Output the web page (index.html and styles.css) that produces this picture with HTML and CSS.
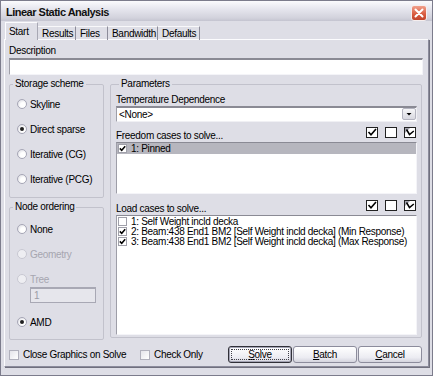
FILE: index.html
```html
<!DOCTYPE html>
<html lang="en">
<head>
    <title>Linear Static Analysis</title>
    <link rel="stylesheet" href="styles.css">
</head>
<body>
<div class="window">
    <div class="titlebar">
        <span class="title">Linear Static Analysis</span>
        <span class="close-btn">
            <svg width="16" height="16" viewBox="0 0 16 16"><path d="M4.5 4.5 L11.5 11.5 M11.5 4.5 L4.5 11.5" stroke="#fff" stroke-width="2" stroke-linecap="round"/></svg>
        </span>
    </div>

    <div class="tabs">
        <span class="tab selected w-start">Start</span>
        <span class="tab w-results">Results</span>
        <span class="tab w-files">Files</span>
        <span class="tab w-band">Bandwidth</span>
        <span class="tab w-defaults">Defaults</span>
    </div>

    <div class="panel">
        <div class="label">Description</div>
        <div class="textbox"></div>

        <div class="columns">
            <div class="left-col">
                <fieldset class="group storage">
                    <legend>Storage scheme</legend>
                    <div class="option first"><span class="dot"></span>Skyline</div>
                    <div class="option checked"><span class="dot"></span>Direct sparse</div>
                    <div class="option"><span class="dot"></span>Iterative (CG)</div>
                    <div class="option"><span class="dot"></span>Iterative (PCG)</div>
                </fieldset>

                <fieldset class="group nodes">
                    <legend>Node ordering</legend>
                    <div class="option first"><span class="dot"></span>None</div>
                    <div class="option disabled"><span class="dot"></span>Geometry</div>
                    <div class="option disabled"><span class="dot"></span>Tree</div>
                    <div class="tree-box">1</div>
                    <div class="option checked amd"><span class="dot"></span>AMD</div>
                </fieldset>
            </div>

            <fieldset class="group params">
                <legend>Parameters</legend>
                <div class="label temp-label">Temperature Dependence</div>
                <div class="select">
                    <span class="select-text">&lt;None&gt;</span>
                    <span class="drop-btn">
                        <svg width="12" height="10" viewBox="0 0 12 10"><path d="M3.5 4 H8.5 L6 6.5 Z" fill="#000"/></svg>
                    </span>
                </div>

                <div class="list-head">
                    <span class="head-text">Freedom cases to solve...</span>
                    <span class="tools">
                        <svg width="12" height="11" viewBox="0 0 12 11"><rect x="0.5" y="0.5" width="11" height="10" fill="#fff" stroke="#222"/><path d="M2.5 5 L5 7.8 L10 2" stroke="#000" stroke-width="1.6" fill="none"/></svg>
                        <svg width="12" height="11" viewBox="0 0 12 11"><rect x="0.5" y="0.5" width="11" height="10" fill="#fff" stroke="#222"/></svg>
                        <svg width="12" height="11" viewBox="0 0 12 11"><rect x="0.5" y="0.5" width="11" height="10" fill="#fff" stroke="#222"/><path d="M1 1 H6 L1 6 Z" fill="#a4a4ae"/><path d="M2.5 2.5 L5.5 7.5 L9.8 4" stroke="#000" stroke-width="1.5" fill="none"/></svg>
                    </span>
                </div>
                <div class="listbox freedom">
                    <div class="item selected"><span class="cb"><svg width="7" height="7" viewBox="0 0 7 7"><path d="M0.8 3.4 L2.7 5.3 L6.2 1.2" stroke="#000" stroke-width="1.5" fill="none"/></svg></span>1: Pinned</div>
                </div>

                <div class="list-head load-head">
                    <span class="head-text">Load cases to solve...</span>
                    <span class="tools">
                        <svg width="12" height="11" viewBox="0 0 12 11"><rect x="0.5" y="0.5" width="11" height="10" fill="#fff" stroke="#222"/><path d="M2.5 5 L5 7.8 L10 2" stroke="#000" stroke-width="1.6" fill="none"/></svg>
                        <svg width="12" height="11" viewBox="0 0 12 11"><rect x="0.5" y="0.5" width="11" height="10" fill="#fff" stroke="#222"/></svg>
                        <svg width="12" height="11" viewBox="0 0 12 11"><rect x="0.5" y="0.5" width="11" height="10" fill="#fff" stroke="#222"/><path d="M1 1 H6 L1 6 Z" fill="#a4a4ae"/><path d="M2.5 2.5 L5.5 7.5 L9.8 4" stroke="#000" stroke-width="1.5" fill="none"/></svg>
                    </span>
                </div>
                <div class="listbox loads">
                    <div class="item"><span class="cb"></span>1: Self Weight incld decka</div>
                    <div class="item"><span class="cb"><svg width="7" height="7" viewBox="0 0 7 7"><path d="M0.8 3.4 L2.7 5.3 L6.2 1.2" stroke="#000" stroke-width="1.5" fill="none"/></svg></span>2: Beam:438 End1 BM2 [Self Weight incld decka] (Min Response)</div>
                    <div class="item"><span class="cb"><svg width="7" height="7" viewBox="0 0 7 7"><path d="M0.8 3.4 L2.7 5.3 L6.2 1.2" stroke="#000" stroke-width="1.5" fill="none"/></svg></span>3: Beam:438 End1 BM2 [Self Weight incld decka] (Max Response)</div>
                </div>
            </fieldset>
        </div>

        <div class="bottom-row">
            <span class="check-opt close-opt"><span class="box"></span>Close Graphics on Solve</span>
            <span class="check-opt"><span class="box"></span>Check Only</span>
            <span class="buttons">
                <span class="btn default"><u>S</u>olve</span>
                <span class="btn"><u>B</u>atch</span>
                <span class="btn"><u>C</u>ancel</span>
            </span>
        </div>
    </div>
</div>
</body>
</html>
```

FILE: styles.css
```css
body {
    margin: 0;
    font-family: "Liberation Sans", Arial, sans-serif;
    font-size: 10px;
    letter-spacing: -0.3px;
    color: #000;
    background: #fff;
}

.window {
    width: 433px;
    height: 376px;
    box-sizing: border-box;
    border: 1px solid #7c7c8c;
    background: #dedee6;
    padding: 0 3px;
}

/* title bar */
.titlebar {
    display: flex;
    justify-content: space-between;
    height: 20px;
    margin: 0 -3px;
    background: linear-gradient(#fbfbfd, #e6e6ee 40%, #d2d2dc 85%, #c4c4d0);
}

.title {
    font-weight: bold;
    font-size: 11px;
    letter-spacing: -0.5px;
    line-height: 20px;
    padding: 1px 0 0 5px;
    color: #111;
}

.close-btn {
    width: 16px;
    height: 16px;
    margin: 4px 5px 0 0;
    box-sizing: border-box;
    border: 1px solid #f6eeee;
    border-radius: 3px;
    background: linear-gradient(#f0a08c, #d85a3e 60%, #c0442c);
    display: flex;
    align-items: center;
    justify-content: center;
}

.close-btn svg {
    margin: -1px;
}

/* tabs */
.tabs {
    display: flex;
    align-items: flex-end;
    height: 17px;
    margin-top: 2px;
    margin-bottom: -1px;
    padding-left: 1px;
}

.tab {
    box-sizing: border-box;
    height: 14px;
    line-height: 13px;
    padding-left: 4px;
    border-top: 1px solid #f8f8fa;
    border-right: 1px solid #8c8c9a;
    white-space: nowrap;
}

.tab.selected {
    position: relative;
    height: 18px;
    line-height: 17px;
    border: 1px solid #a8a8b4;
    border-bottom: none;
    border-left-color: #fcfcfe;
    border-top-color: #fcfcfe;
    background: #dedee6;
    padding-left: 3px;
}

.w-start { width: 33px; }
.w-results { width: 38px; }
.w-files { width: 32px; }
.w-band { width: 50px; }
.w-defaults { width: 42px; }

/* tab page */
.panel {
    height: 328px;
    box-sizing: border-box;
    border: 1px solid;
    border-color: #fcfcfe #8c8c9c #8c8c9c #fcfcfe;
    box-shadow: 1px 1px 0 #70707e;
    padding: 5px 5px 0 4px;
}

.label {
    line-height: 12px;
    white-space: nowrap;
}

.textbox {
    height: 17px;
    margin-top: 1px;
    box-sizing: border-box;
    background: #fff;
    border: 1px solid;
    border-top: 2px solid #8a8a94;
    border-color: #8a8a94 #f4f4f8 #f4f4f8 #9e9ea8;
}

.columns {
    display: flex;
    margin-top: 3px;
}

.left-col {
    width: 95px;
    display: flex;
    flex-direction: column;
}

.group {
    margin: 0;
    padding: 0;
    min-width: 0;
    box-sizing: border-box;
    border: 1px solid #c2c2cc;
    border-radius: 2px;
}

.group legend {
    padding: 0 2px;
    margin-left: 3px;
    line-height: 12px;
    white-space: nowrap;
}

.storage {
    height: 120px;
}

.nodes {
    height: 139px;
    margin-top: 3px;
}

.params {
    flex: 1;
    height: 260px;
    margin-left: 6px;
    margin-right: 1px;
    padding: 0 4px 0 5px;
}

/* radio buttons */
.option {
    display: flex;
    align-items: center;
    height: 12px;
    margin: 13px 0 0 7px;
    white-space: nowrap;
}

.option.first {
    margin-top: 8px;
}

.nodes .option.first {
    margin-top: 10px;
}

.dot {
    width: 10px;
    height: 10px;
    box-sizing: border-box;
    border: 1px solid #a6a6b6;
    border-radius: 50%;
    background: radial-gradient(circle at 65% 65%, #ffffff 35%, #d4d4dc 100%);
    margin-right: 3px;
    display: flex;
    align-items: center;
    justify-content: center;
}

.option.checked .dot::after {
    content: "";
    width: 4px;
    height: 4px;
    border-radius: 50%;
    background: #202020;
}

.option.disabled {
    color: #a6a6b0;
}

.option.disabled .dot {
    border-color: #c8c8d2;
    background: #eeeef2;
}

.tree-box {
    width: 66px;
    height: 16px;
    margin: 2px 0 0 20px;
    box-sizing: border-box;
    border: 1px solid #a8a8b4;
    border-top: 2px solid #a8a8b4;
    background: #e6e6ec;
    color: #9c9ca6;
    padding-left: 3px;
    line-height: 13px;
}

/* parameters */
.temp-label {
    margin-top: 4px;
}

.select {
    display: flex;
    justify-content: space-between;
    height: 16px;
    box-sizing: border-box;
    background: #fff;
    border: 1px solid;
    border-top: 2px solid #8a8a94;
    border-color: #8a8a94 #f0f0f4 #f0f0f4 #9e9ea8;
}

.select-text {
    line-height: 13px;
    padding-left: 2px;
}

.drop-btn {
    width: 14px;
    height: 12px;
    box-sizing: border-box;
    border: 1px solid #b4b4c0;
    border-radius: 2px;
    background: linear-gradient(#f6f6f8, #d8d8e0);
    display: flex;
    align-items: center;
    justify-content: center;
}

.list-head {
    display: flex;
    justify-content: space-between;
    height: 15px;
    margin-top: 5px;
}

.load-head {
    margin-top: 6px;
}

.head-text {
    align-self: flex-end;
    line-height: 12px;
    white-space: nowrap;
}

.tools {
    display: flex;
    gap: 7px;
    margin-right: 1px;
}

.listbox {
    box-sizing: border-box;
    background: #fff;
    border: 1px solid;
    border-color: #8a8a94 #f4f4f8 #f4f4f8 #9e9ea8;
    overflow: hidden;
}

.freedom {
    height: 52px;
}

.loads {
    height: 120px;
}

.item {
    display: flex;
    align-items: center;
    height: 10px;
    padding-left: 1px;
    white-space: nowrap;
}

.freedom .item {
    height: 11px;
}

.item.selected {
    background: #b6b6be;
}

.cb {
    width: 9px;
    height: 9px;
    box-sizing: border-box;
    border: 1px solid #a0a0aa;
    background: #fff;
    margin-right: 4px;
    display: flex;
    align-items: center;
    justify-content: center;
}

/* bottom row */
.bottom-row {
    display: flex;
    align-items: center;
    height: 17px;
    margin-top: 6px;
}

.check-opt {
    display: flex;
    align-items: center;
    white-space: nowrap;
}

.close-opt {
    width: 131px;
}

.box {
    width: 10px;
    height: 10px;
    box-sizing: border-box;
    border: 1px solid #b0b0bc;
    background: linear-gradient(135deg, #e4e4ea, #ffffff);
    margin-right: 4px;
}

.buttons {
    display: flex;
    gap: 1px;
    margin-left: auto;
    margin-right: 1px;
}

.btn {
    width: 64px;
    height: 17px;
    box-sizing: border-box;
    border: 1px solid #8c8c9c;
    border-radius: 3px;
    background: linear-gradient(#ffffff, #ececf2 70%, #d4d4de);
    text-align: center;
    line-height: 15px;
}

.btn.default {
    border-color: #303038;
    box-shadow: inset 0 0 0 1px #a4a4b4;
    outline: 1px dotted #404048;
    outline-offset: -4px;
}
```
